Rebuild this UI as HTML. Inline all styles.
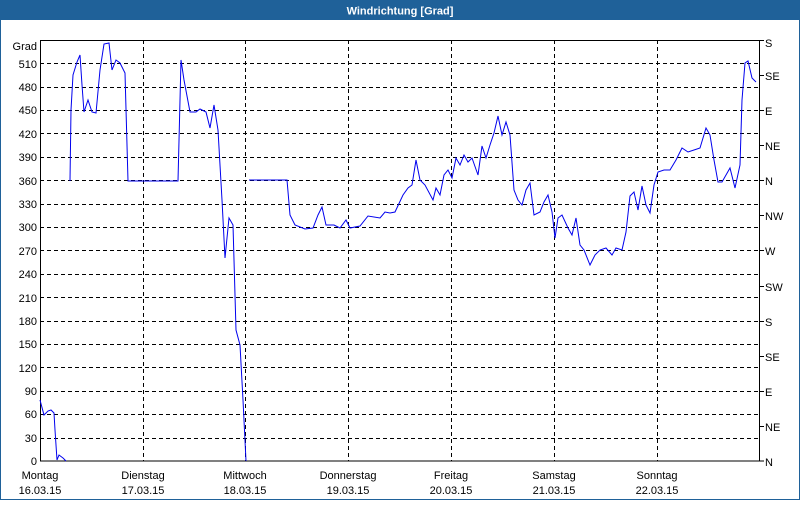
<!DOCTYPE html>
<html><head><meta charset="utf-8"><style>
html,body{margin:0;padding:0;background:#fff}
body{width:800px;height:500px;overflow:hidden;font-family:"Liberation Sans",sans-serif}
</style></head><body>
<svg width="800" height="500" xmlns="http://www.w3.org/2000/svg" font-family="Liberation Sans, sans-serif" font-size="11" fill="#000">
<rect x="0" y="0" width="800" height="500" fill="#fff"/>
<rect x="0" y="0" width="800" height="20" fill="#1f6199"/>
<rect x="0.5" y="0.5" width="799" height="499" fill="none" stroke="#1f6199"/>
<text x="400" y="14.5" fill="#fff" font-weight="bold" font-size="11" text-anchor="middle">Windrichtung [Grad]</text>
<g stroke="#000" stroke-dasharray="4,3" stroke-width="1">
<line x1="40" x2="760" y1="63.5" y2="63.5"/><line x1="40" x2="760" y1="87.5" y2="87.5"/><line x1="40" x2="760" y1="110.5" y2="110.5"/><line x1="40" x2="760" y1="133.5" y2="133.5"/><line x1="40" x2="760" y1="157.5" y2="157.5"/><line x1="40" x2="760" y1="180.5" y2="180.5"/><line x1="40" x2="760" y1="204.5" y2="204.5"/><line x1="40" x2="760" y1="227.5" y2="227.5"/><line x1="40" x2="760" y1="250.5" y2="250.5"/><line x1="40" x2="760" y1="274.5" y2="274.5"/><line x1="40" x2="760" y1="297.5" y2="297.5"/><line x1="40" x2="760" y1="321.5" y2="321.5"/><line x1="40" x2="760" y1="344.5" y2="344.5"/><line x1="40" x2="760" y1="367.5" y2="367.5"/><line x1="40" x2="760" y1="391.5" y2="391.5"/><line x1="40" x2="760" y1="414.5" y2="414.5"/><line x1="40" x2="760" y1="438.5" y2="438.5"/>
<line y1="40" y2="461" x1="143.5" x2="143.5"/><line y1="40" y2="461" x1="245.5" x2="245.5"/><line y1="40" y2="461" x1="348.5" x2="348.5"/><line y1="40" y2="461" x1="451.5" x2="451.5"/><line y1="40" y2="461" x1="554.5" x2="554.5"/><line y1="40" y2="461" x1="657.5" x2="657.5"/>
</g>
<rect x="40.5" y="40.5" width="719" height="420.5" fill="none" stroke="#000"/>
<g stroke="#000"><line x1="760" x2="764" y1="40.5" y2="40.5"/><line x1="760" x2="764" y1="75.5" y2="75.5"/><line x1="760" x2="764" y1="110.5" y2="110.5"/><line x1="760" x2="764" y1="145.5" y2="145.5"/><line x1="760" x2="764" y1="180.5" y2="180.5"/><line x1="760" x2="764" y1="215.5" y2="215.5"/><line x1="760" x2="764" y1="250.5" y2="250.5"/><line x1="760" x2="764" y1="286.5" y2="286.5"/><line x1="760" x2="764" y1="321.5" y2="321.5"/><line x1="760" x2="764" y1="356.5" y2="356.5"/><line x1="760" x2="764" y1="391.5" y2="391.5"/><line x1="760" x2="764" y1="426.5" y2="426.5"/><line x1="760" x2="764" y1="461" y2="461"/></g>
<g text-anchor="end">
<text x="37" y="50">Grad</text><text x="37" y="68">510</text><text x="37" y="91">480</text><text x="37" y="114">450</text><text x="37" y="138">420</text><text x="37" y="161">390</text><text x="37" y="185">360</text><text x="37" y="208">330</text><text x="37" y="231">300</text><text x="37" y="255">270</text><text x="37" y="278">240</text><text x="37" y="302">210</text><text x="37" y="325">180</text><text x="37" y="348">150</text><text x="37" y="372">120</text><text x="37" y="395">90</text><text x="37" y="418">60</text><text x="37" y="442">30</text><text x="37" y="465">0</text>
</g>
<g>
<text x="765" y="47">S</text><text x="765" y="80">SE</text><text x="765" y="115">E</text><text x="765" y="150">NE</text><text x="765" y="185">N</text><text x="765" y="220">NW</text><text x="765" y="255">W</text><text x="765" y="291">SW</text><text x="765" y="326">S</text><text x="765" y="361">SE</text><text x="765" y="396">E</text><text x="765" y="431">NE</text><text x="765" y="466">N</text>
</g>
<g text-anchor="middle">
<text x="40" y="479">Montag</text><text x="40" y="494">16.03.15</text>
<text x="143" y="479">Dienstag</text><text x="143" y="494">17.03.15</text>
<text x="245" y="479">Mittwoch</text><text x="245" y="494">18.03.15</text>
<text x="348" y="479">Donnerstag</text><text x="348" y="494">19.03.15</text>
<text x="451" y="479">Freitag</text><text x="451" y="494">20.03.15</text>
<text x="554" y="479">Samstag</text><text x="554" y="494">21.03.15</text>
<text x="657" y="479">Sonntag</text><text x="657" y="494">22.03.15</text>
</g>
<g fill="none" stroke="#0000ee" stroke-width="1">
<polyline points="40,400 44,415 48,411 51,410 54,413 55,430 57,460 59,455 63,458 66,461"/>
<polyline points="70,181 71,110 73,75 77,62 80,55 82,85 84,112 88,100 92,112 96,113 100,70 104,44 109,43 112,70 116,60 120,63 125,73 128,181 178,181 181,60 184,80 190,112 196,112 200,109 206,112 210,128 214,105 218,130 222,200 225,258 229,218 233,225 236,330 240,345 243,400 246,461"/>
<polyline points="249,180 287,180 290,215 295,225 305,229 313,228 318,215 322,207 326,225 334,225 340,228 346,220 350,228 360,226 368,216 380,218 385,212 390,213 395,212 403,195 408,188 412,185 416,160 420,180 425,185 433,200 436,188 440,195 444,175 448,170 452,178 456,158 460,165 464,155 468,162 472,158 478,175 482,146 486,158 490,145 494,133 498,116 502,135 506,122 510,135 514,190 518,200 522,205 526,190 530,183 534,215 540,212 544,202 548,195 552,212 555,238 558,218 562,215 568,228 572,235 576,218 580,245 584,250 590,265 595,255 600,250 606,248 612,255 616,248 622,250 626,232 630,196 634,192 638,210 642,186 646,205 650,213 654,185 658,172 664,170 670,170 676,160 682,148 688,152 694,150 700,148 706,128 710,135 714,160 718,182 722,182 726,175 730,168 735,188 740,165 742,100 745,63 748,61 752,78 756,82"/>
</g>
</svg>
</body></html>
